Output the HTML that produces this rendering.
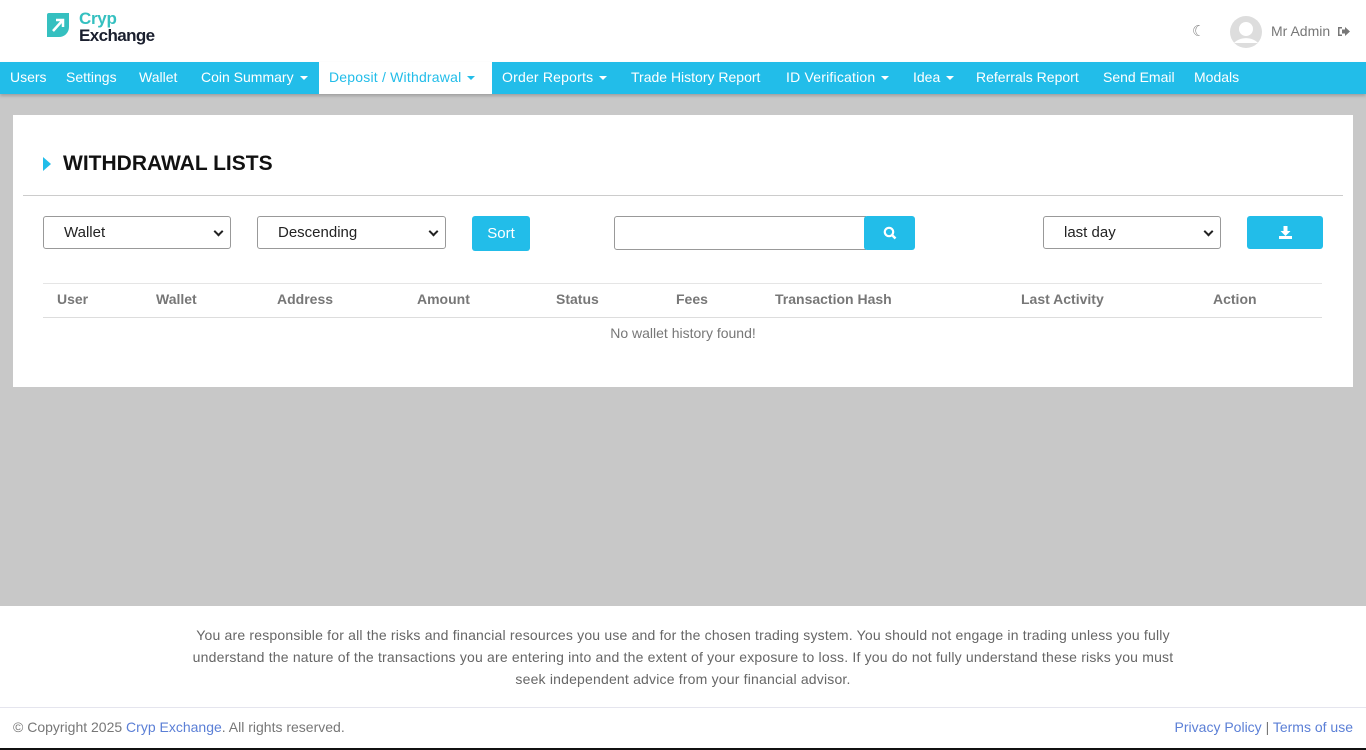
<!DOCTYPE html>
<html><head><meta charset="utf-8"><style>
*{box-sizing:border-box;margin:0;padding:0}
body{width:1366px;height:750px;background:#c8c8c8;font-family:"Liberation Sans",sans-serif;position:relative;overflow:hidden}
.a{position:absolute;white-space:nowrap}
#hdr{left:0;top:0;width:1366px;height:62px;background:#fff}
#nav{left:0;top:62px;width:1366px;height:32px;background:#22bde9;box-shadow:0 2px 3px rgba(0,0,0,.2)}
#nav span{position:absolute;top:7px;color:#fff;font-size:14px}
.car{display:inline-block;width:0;height:0;border-left:4px solid transparent;border-right:4px solid transparent;border-top:4px solid currentColor;vertical-align:middle;margin-left:6px}
.sel{position:absolute;height:33px;border:1px solid #999;border-radius:3px;background:#fff;font-size:15px;color:#222;padding:7px 20px}
.sel:after{content:"";position:absolute;right:8px;top:11px;width:5px;height:5px;border-right:2px solid #222;border-bottom:2px solid #222;transform:rotate(45deg)}
.btn{position:absolute;background:#22bde9;border-radius:3px;color:#fff;font-size:15px;text-align:center}
.th{position:absolute;top:291px;font-size:14px;font-weight:bold;color:#777}
</style></head><body>
<div id="hdr" class="a">
 <svg class="a" style="left:45px;top:11px" width="26" height="28" viewBox="0 0 26 28"><path d="M4 2h20v14a10 10 0 0 1-10 10H2V4a2 2 0 0 1 2-2z" fill="#35c0c0"/><path d="M8 20L17 10M11 9h7v7" stroke="#fff" stroke-width="2.5" fill="none"/></svg>
 <div class="a" style="left:79px;top:10px;font-size:17px;font-weight:bold;color:#35c0c0;line-height:18px;letter-spacing:-.3px">Cryp</div>
 <div class="a" style="left:79px;top:27px;font-size:17px;font-weight:bold;color:#1a1f2e;line-height:18px;letter-spacing:-.6px">Exchange</div>
 <div class="a" style="left:1192px;top:22px;font-size:15px;color:#888">☾</div>
 <svg class="a" style="left:1230px;top:16px" width="32" height="32" viewBox="0 0 32 32"><circle cx="16" cy="16" r="16" fill="#ddd"/><circle cx="16" cy="13" r="7" fill="#fff"/><path d="M4 27a14 10 0 0 1 24 0" fill="#fff"/></svg>
 <div class="a" style="left:1271px;top:23px;font-size:14px;color:#777">Mr Admin</div>
 <svg class="a" style="left:1337px;top:26px" width="13" height="11" viewBox="0 0 13 11"><path d="M1 1h4v1.5H2.5v6H5V10H1z" fill="#777"/><path d="M5 3.5h3V1l5 4.5L8 10V7.5H5z" fill="#777"/></svg>
</div>
<div id="nav" class="a">
 <span style="left:10px">Users</span>
 <span style="left:66px">Settings</span>
 <span style="left:139px">Wallet</span>
 <span style="left:201px">Coin Summary<i class="car"></i></span>
 <div class="a" style="left:319px;top:0;width:173px;height:32px;background:#fff"></div>
 <span style="left:329px;color:#22bde9;letter-spacing:.2px">Deposit / Withdrawal<i class="car"></i></span>
 <span style="left:502px;letter-spacing:.2px">Order Reports<i class="car"></i></span>
 <span style="left:631px">Trade History Report</span>
 <span style="left:786px;letter-spacing:.2px">ID Verification<i class="car"></i></span>
 <span style="left:913px">Idea<i class="car"></i></span>
 <span style="left:976px">Referrals Report</span>
 <span style="left:1103px">Send Email</span>
 <span style="left:1194px">Modals</span>
</div>
<div class="a" style="left:13px;top:115px;width:1340px;height:272px;background:#fff"></div>
<div class="a" style="left:43px;top:157px;width:0;height:0;border-top:7px solid transparent;border-bottom:7px solid transparent;border-left:8px solid #22bde9"></div>
<div class="a" style="left:63px;top:152px;font-size:21px;font-weight:bold;color:#111">WITHDRAWAL LISTS</div>
<div class="a" style="left:23px;top:195px;width:1320px;height:1px;background:#ccc"></div>
<div class="sel" style="left:43px;top:216px;width:188px">Wallet</div>
<div class="sel" style="left:257px;top:216px;width:189px">Descending</div>
<div class="btn" style="left:472px;top:216px;width:58px;height:35px;line-height:35px">Sort</div>
<div class="a" style="left:614px;top:216px;width:252px;height:34px;border:1px solid #999;border-radius:3px 0 0 3px;background:#fff"></div>
<div class="btn" style="left:864px;top:216px;width:51px;height:34px"><svg style="margin-top:10px" width="14" height="14" viewBox="0 0 14 14"><circle cx="6" cy="6" r="4.2" stroke="#fff" stroke-width="2.2" fill="none"/><path d="M9 9l3.5 3.5" stroke="#fff" stroke-width="2.5"/></svg></div>
<div class="sel" style="left:1043px;top:216px;width:178px">last day</div>
<div class="btn" style="left:1247px;top:216px;width:76px;height:33px"><svg style="margin-top:10px" width="13" height="13" viewBox="0 0 13 13"><path d="M4.5 0h4v5h3l-5 5-5-5h3z" fill="#fff"/><path d="M0 10h13v3H0z" fill="#fff"/></svg></div>
<div class="a" style="left:43px;top:283px;width:1279px;height:1px;background:#e5e5e5"></div>
<div class="a" style="left:43px;top:317px;width:1279px;height:1px;background:#ddd"></div>
<div class="th" style="left:57px">User</div>
<div class="th" style="left:156px">Wallet</div>
<div class="th" style="left:277px">Address</div>
<div class="th" style="left:417px">Amount</div>
<div class="th" style="left:556px">Status</div>
<div class="th" style="left:676px">Fees</div>
<div class="th" style="left:775px">Transaction Hash</div>
<div class="th" style="left:1021px">Last Activity</div>
<div class="th" style="left:1213px">Action</div>
<div class="a" style="left:0;top:325px;width:1366px;text-align:center;font-size:14px;color:#777">No wallet history found!</div>
<div class="a" style="left:0;top:606px;width:1366px;height:144px;background:#fff"></div>
<div class="a" style="left:0;top:624px;width:1366px;text-align:center;font-size:14px;line-height:22px;color:#666;white-space:normal;padding:0 180px;letter-spacing:.19px">You are responsible for all the risks and financial resources you use and for the chosen trading system. You should not engage in trading unless you fully understand the nature of the transactions you are entering into and the extent of your exposure to loss. If you do not fully understand these risks you must<br>seek independent advice from your financial advisor.</div>
<div class="a" style="left:0;top:707px;width:1366px;height:1px;background:#e5e5ee"></div>
<div class="a" style="left:13px;top:719px;font-size:14px;color:#777">© Copyright 2025 <span style="color:#5b7fd6">Cryp Exchange</span>. All rights reserved.</div>
<div class="a" style="right:13px;top:719px;font-size:14px;color:#777"><span style="color:#5b7fd6">Privacy Policy</span> | <span style="color:#5b7fd6">Terms of use</span></div>
<div class="a" style="left:0;top:748px;width:1366px;height:2px;background:#111"></div>
</body></html>
